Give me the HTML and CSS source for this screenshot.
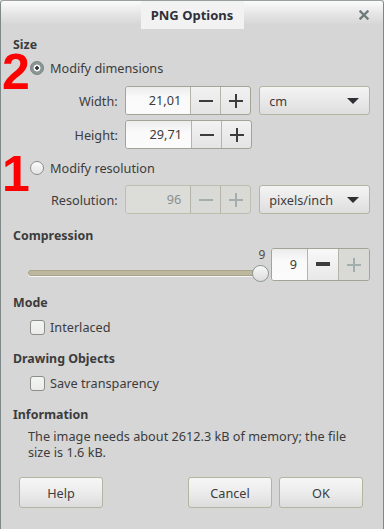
FILE: index.html
```html
<!DOCTYPE html>
<html lang="en">
<head>
  <meta charset="UTF-8">
  <meta name="viewport" content="width=device-width, initial-scale=1.0">
  <title>PNG Options</title>
  <link rel="stylesheet" href="styles.css">
</head>
<body>
  <div class="window">
    <div class="titlebar">
      <div class="title">PNG Options</div>
      <svg class="close" width="10" height="10" viewBox="0 0 10 10">
        <path d="M1.5 1.5 L8.5 8.5 M8.5 1.5 L1.5 8.5" stroke="#6f7b7b" stroke-width="2.4" stroke-linecap="square"/>
      </svg>
    </div>

    <div class="content">
      <div class="heading">Size</div>

      <label class="option">
        <span class="radio checked"></span>
        <span>Modify dimensions</span>
      </label>

      <div class="form-row">
        <span class="label">Width:</span>
        <div class="spin">
          <span class="entry">21,01</span>
          <span class="btn minus"></span>
          <span class="btn plus"></span>
        </div>
        <div class="combo"><span>cm</span><span class="arrow"></span></div>
      </div>

      <div class="form-row">
        <span class="label">Height:</span>
        <div class="spin">
          <span class="entry">29,71</span>
          <span class="btn minus"></span>
          <span class="btn plus"></span>
        </div>
      </div>

      <label class="option second">
        <span class="radio"></span>
        <span>Modify resolution</span>
      </label>

      <div class="form-row">
        <span class="label">Resolution:</span>
        <div class="spin disabled">
          <span class="entry">96</span>
          <span class="btn minus"></span>
          <span class="btn plus"></span>
        </div>
        <div class="combo"><span>pixels/inch</span><span class="arrow"></span></div>
      </div>

      <div class="heading gap">Compression</div>

      <div class="slider-row">
        <div class="slider">
          <span class="track"></span>
          <span class="knob"></span>
          <span class="slider-value">9</span>
        </div>
        <div class="spin small">
          <span class="entry">9</span>
          <span class="btn minus hot"></span>
          <span class="btn plus off"></span>
        </div>
      </div>

      <div class="heading gap2">Mode</div>
      <label class="check"><span class="box"></span><span>Interlaced</span></label>

      <div class="heading gap3">Drawing Objects</div>
      <label class="check"><span class="box"></span><span>Save transparency</span></label>

      <div class="heading gap3">Information</div>
      <p class="info">The image needs about 2612.3 kB of memory; the file size is 1.6 kB.</p>

      <div class="buttons">
        <button>Help</button>
        <div class="spacer"></div>
        <button>Cancel</button>
        <button>OK</button>
      </div>
    </div>

    <!-- red annotations drawn over the dialog -->
    <span class="mark mark-2">2</span>
    <span class="mark mark-1">1</span>
  </div>
</body>
</html>
```

FILE: styles.css
```css
body {
  margin: 0;
  background: #d6d6d6;
  font-family: "Noto Sans", "DejaVu Sans", sans-serif;
  font-size: 12.7px;
  color: #3c3c3c;
}

.window {
  position: relative;
  width: 384px;
  height: 529px;
  box-sizing: border-box;
  background: #d6d6d6;
  border-left: 1px solid #7f8888;
  border-right: 1px solid #7f8888;
  border-top: 1px solid #9aa0a0;
  border-radius: 4px 4px 0 0;
  overflow: hidden;
}

.titlebar {
  height: 28px;
  display: flex;
  justify-content: center;
  background: linear-gradient(#fbfbfb, #e6e6e6 45%, #d6d6d6 85%);
  position: relative;
}
.title {
  width: 103px;
  margin-top: -1px;
  border-top: 1px solid #8b4a2c;
  background: #f2f2f2;
  font-weight: bold;
  font-size: 13px;
  color: #2f2f3a;
  text-align: center;
  line-height: 28px;
}
.close {
  position: absolute;
  right: 14px;
  top: 9px;
}

.content {
  padding: 0 13px 0 12px;
}

.heading {
  font-weight: bold;
  font-size: 12.4px;
  height: 16px;
  line-height: 16px;
  padding-top: 2px;
  margin-top: 6px;
}
.heading.gap { margin-top: 12px; }
.heading.gap2 { margin-top: 12px; }
.heading.gap3 { margin-top: 13px; }

.option {
  display: flex;
  align-items: center;
  gap: 6px;
  height: 18px;
  margin-top: 6px;
  padding-left: 17px;
}
.option.second { margin-top: 10px; }

.radio {
  width: 14px;
  height: 14px;
  box-sizing: border-box;
  border-radius: 50%;
  border: 1px solid #8a8f88;
  background: linear-gradient(#fbfbfb, #e4e4e4);
}
.radio.checked {
  border-color: #7a8282;
  background: radial-gradient(circle, #2f3333 0 1.5px, #f4f4f4 2px 3.2px, #8a9696 3.8px);
}

.form-row {
  display: flex;
  align-items: center;
  height: 29px;
  margin-top: 5px;
  margin-left: -12px;
}
.option + .form-row { margin-top: 9px; }
.second + .form-row { margin-top: 8px; }

.label {
  width: 117px;
  text-align: right;
  margin-right: 7px;
}

.spin {
  display: flex;
  width: 127px;
  height: 29px;
  box-sizing: border-box;
  border: 1px solid #a3a396;
  border-radius: 3px;
  overflow: hidden;
  background: linear-gradient(#f2f2f2, #e4e4e4);
}
.spin .entry {
  flex: 1;
  background: linear-gradient(#ececec, #fafafa 40%, #fbfbfb);
  text-align: right;
  padding-right: 9px;
  line-height: 27px;
  color: #3c3c3c;
  border-right: 1px solid #b4b4a8;
}
.spin .btn {
  width: 29px;
  position: relative;
}
.spin .btn + .btn { border-left: 1px solid #b4b4a8; }
.spin .btn::before,
.spin .btn::after {
  content: "";
  position: absolute;
  background: #3c3c3c;
  left: 8px;
  top: 13px;
  width: 14px;
  height: 2px;
}
.spin .plus::after {
  left: 14px;
  top: 7px;
  width: 2px;
  height: 14px;
}
.spin.disabled {
  border-color: #bdbdb0;
  background: #d9d9d6;
}
.spin.disabled .entry {
  background: #dcdcd8;
  color: #8a9090;
}
.spin.disabled .btn::before,
.spin.disabled .btn::after,
.spin .off::before,
.spin .off::after {
  background: #a3aeae;
}
.spin .hot { background: linear-gradient(#f8f8f8, #e8e8e8); }
.spin .off { background: #d9d9d6; }

.combo {
  margin-left: 8px;
  width: 111px;
  height: 29px;
  box-sizing: border-box;
  border: 1px solid #b4b4a0;
  border-radius: 3px;
  background: linear-gradient(#f4f4f4, #dedede);
  display: flex;
  align-items: center;
  justify-content: space-between;
  padding: 0 10px 0 9px;
}
.arrow {
  width: 0;
  height: 0;
  border-left: 6px solid transparent;
  border-right: 6px solid transparent;
  border-top: 6px solid #2f2f33;
}

.slider-row {
  display: flex;
  align-items: flex-start;
  height: 33px;
  margin-top: 4px;
}
.slider {
  position: relative;
  width: 234px;
  height: 33px;
  margin-left: 15px;
}
.slider-value {
  position: absolute;
  right: -4px;
  top: 0;
  font-size: 12px;
  line-height: 14px;
  color: #5a4a3e;
}
.track {
  position: absolute;
  left: 0;
  right: 0;
  bottom: 5px;
  height: 4px;
  border-radius: 3px;
  background: #bdb89d;
  border: 1px solid #a8a48c;
  box-shadow: 0 1px 0 #f4f4f4;
}
.knob {
  position: absolute;
  right: -8px;
  bottom: -1px;
  width: 17px;
  height: 17px;
  box-sizing: border-box;
  border-radius: 50%;
  border: 1px solid #8c9494;
  background: linear-gradient(#f8f8f8, #dcdcdc);
}
.spin.small {
  width: 99px;
  height: 33px;
  margin-left: 10px;
}
.spin.small .entry { line-height: 31px; padding-right: 10px; }
.spin.small .btn { width: 30px; }
.spin.small .btn::before { top: 15px; left: 8px; }
.spin.small .plus::after { top: 9px; left: 14px; }

.check {
  display: flex;
  align-items: center;
  gap: 5px;
  height: 18px;
  margin-top: 7px;
  padding-left: 17px;
}
.box {
  width: 15px;
  height: 15px;
  box-sizing: border-box;
  border: 1px solid #8a8f88;
  border-radius: 3px;
  background: linear-gradient(#f4f4f4, #ececec);
}

.info {
  margin: 5px 0 0 15px;
  line-height: 16px;
  width: 330px;
}

.buttons {
  display: flex;
  gap: 7px;
  margin: 17px 7px 0 6px;
}
.spacer { flex: 1; }
button {
  width: 84px;
  height: 31px;
  font-family: inherit;
  font-size: 12.7px;
  color: #3c3c3c;
  border: 1px solid #b4b4a0;
  border-radius: 3px;
  background: linear-gradient(#f6f6f6, #ececec 50%, #dcdcdc);
}

.mark {
  position: absolute;
  color: #ff0000;
  font-family: "Liberation Sans", Arial, sans-serif;
  font-weight: bold;
  font-size: 50px;
  line-height: 34px;
}
.mark-2 { left: 1px; top: 54px; }
.mark-1 { left: 1px; top: 156px; }
```
